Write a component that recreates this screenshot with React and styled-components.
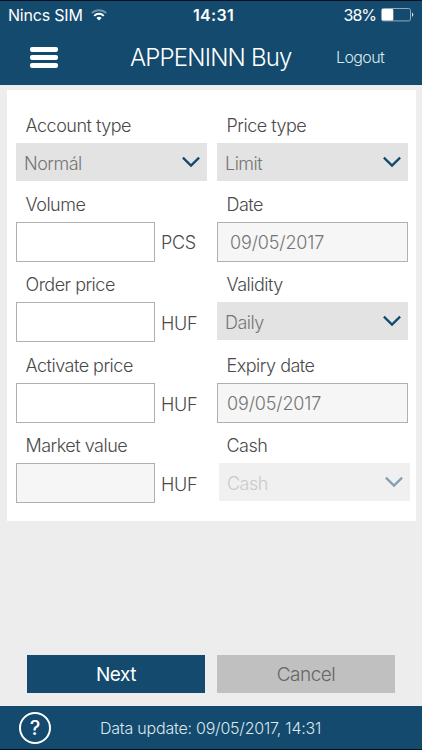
import React, { useState } from 'react'
import styled, { createGlobalStyle } from 'styled-components';

const fields = [
  { label: 'Account type', kind: 'select', value: 'Normál' },
  { label: 'Price type', kind: 'select', value: 'Limit' },
  { label: 'Volume', kind: 'amount', unit: 'PCS' },
  { label: 'Date', kind: 'date', value: '09/05/2017', indent: 12 },
  { label: 'Order price', kind: 'amount', unit: 'HUF' },
  { label: 'Validity', kind: 'select', value: 'Daily' },
  { label: 'Activate price', kind: 'amount', unit: 'HUF' },
  { label: 'Expiry date', kind: 'date', value: '09/05/2017', indent: 9 },
  { label: 'Market value', kind: 'amount', unit: 'HUF', disabled: true },
  { label: 'Cash', kind: 'select', value: 'Cash', disabled: true },
]

function Chevron() {
  return (
    <svg width='18' height='12' viewBox='0 0 18 12' fill='none'>
      <path d='M0.9 1.6 L9 9.6 L17.1 1.6' stroke='currentColor' strokeWidth='2.3' />
    </svg>
  )
}

function StatusBar() {
  return (
    <Status>
      <Carrier>
        Nincs SIM
        <svg width='16' height='12' viewBox='0 0 16 12' fill='none'>
          <path d='M0.8 4.2 A10.2 10.2 0 0 1 15.2 4.2' stroke='#6f94ad' strokeWidth='1.9' />
          <path d='M3.2 6.8 A6.8 6.8 0 0 1 12.8 6.8' stroke='#fff' strokeWidth='1.9' />
          <path d='M8 11.6 L5.4 9 A3.7 3.7 0 0 1 10.6 9 Z' fill='#fff' />
        </svg>
      </Carrier>
      <Clock>14:31</Clock>
      <Battery>
        38%
        <svg width='33' height='14' viewBox='0 0 33 14' fill='none'>
          <rect x='0.5' y='0.5' width='29' height='12.4' rx='1.8' stroke='#8facbf' />
          <rect x='1' y='1' width='11.3' height='11.4' rx='1' fill='#fff' />
          <path d='M31 4.6 Q32.3 5.2 32.3 6.7 Q32.3 8.2 31 8.8 Z' fill='#d6e1e8' />
        </svg>
      </Battery>
    </Status>
  )
}

function Field({ field }) {
  const { label, kind, value, unit, disabled, indent } = field;

  return (
    <Cell>
      <Label>{label}</Label>
      {kind === 'select' && (
        <Select $disabled={disabled}>
          <span>{value}</span>
          <Chevron />
        </Select>
      )}
      {kind === 'date' && <DateBox $indent={indent}>{value}</DateBox>}
      {kind === 'amount' && (
        <Amount>
          <Input disabled={disabled} aria-label={label} />
          <Unit $low={unit === 'HUF'}>{unit}</Unit>
        </Amount>
      )}
    </Cell>
  )
}

function App() {

  const [menuState, setMenuState] = useState(false);

  return (
    <Screen>
      <GlobalStyle />
      <StatusBar />

      <Header>
        <MenuButton aria-label='Menu' aria-expanded={menuState} onClick={() => setMenuState(!menuState)}>
          <i /><i /><i />
        </MenuButton>
        <Title>APPENINN Buy</Title>
        <Logout>Logout</Logout>
      </Header>

      <Card>
        {fields.map((field) => <Field key={field.label} field={field} />)}
      </Card>

      <Actions>
        <Button $primary>Next</Button>
        <Button>Cancel</Button>
      </Actions>

      <Footer>
        <Help>?</Help>
        <Update>Data update: 09/05/2017, 14:31</Update>
      </Footer>
    </Screen>
  )
}

const GlobalStyle = createGlobalStyle`
  body {
    margin: 0;
  }

  * {
    box-sizing: border-box;
  }

  button {
    border: 0;
    padding: 0;
    font: inherit;
    letter-spacing: inherit;
    cursor: pointer;
  }
`

const Screen = styled.div`
  width: 422px;
  height: 750px;
  display: flex;
  flex-direction: column;
  overflow: hidden;
  background: #ededed;
  border-top: 1px solid #06121f;
  border-bottom: 1px solid #06121f;
  font-family: Inter, 'Liberation Sans', sans-serif;
  font-weight: 300;
  font-size: 18px;
  letter-spacing: -0.5px;
  color: #4a4a4a;
`

const Status = styled.div`
  height: 28px;
  display: grid;
  grid-template-columns: 185px 1fr auto;
  align-items: center;
  padding: 0 8px;
  background: #134a6d;
  color: #fff;
  font-size: 16px;
  font-weight: 400;
  letter-spacing: -0.2px;
`

const Carrier = styled.div`
  display: flex;
  align-items: center;
  gap: 8px;
`

const Clock = styled.div`
  font-weight: 600;
  letter-spacing: 0.3px;
`

const Battery = styled.div`
  display: flex;
  align-items: center;
  gap: 5px;
  letter-spacing: -1px;
`

const Header = styled.header`
  height: 56px;
  display: grid;
  grid-template-columns: 130px 206px 1fr;
  align-items: center;
  background: #134a6d;
  color: #fff;
`

const MenuButton = styled.button`
  display: flex;
  flex-direction: column;
  gap: 3px;
  width: 28px;
  margin-left: 30px;
  background: none;

  i {
    height: 5px;
    border-radius: 2px;
    background: #fff;
  }
`

const Title = styled.div`
  font-size: 24px;
  letter-spacing: -0.82px;
  white-space: nowrap;
`

const Logout = styled.a`
  font-size: 16px;
  letter-spacing: -0.6px;
  color: #dce7ee;
`

const Card = styled.main`
  display: grid;
  grid-template-columns: 191px 191px;
  grid-template-rows: 79px 80px 81px 80px 80px;
  column-gap: 10px;
  width: 409px;
  height: 431px;
  margin: 5px 0 0 7px;
  padding: 13px 9px 0;
  background: #fff;
`

const Cell = styled.div`
  padding-top: 5px;
`

const Label = styled.div`
  height: 35px;
  line-height: 36px;
  padding-left: 9.5px;
  white-space: nowrap;
`

const Select = styled.div`
  height: 38px;
  display: flex;
  align-items: center;
  justify-content: space-between;
  padding: 2px 7px 0 8px;
  background: ${(props) => props.$disabled ? '#f0f0f0' : '#e3e3e3'};
  color: ${(props) => props.$disabled ? '#cacaca' : '#757575'};

  ${(props) => props.$disabled && 'margin: 0 -2px 0 2px;'}

  svg {
    margin-bottom: 2px;
    color: ${(props) => props.$disabled ? '#83a0b4' : '#134a6d'};
  }
`

const DateBox = styled.div`
  height: 40px;
  line-height: 40px;
  padding-left: ${(props) => props.$indent}px;
  border: 1px solid #b0b0b0;
  background: #f6f6f6;
  color: #757575;
  letter-spacing: -0.15px;
`

const Amount = styled.label`
  display: flex;
  align-items: center;
  gap: 6px;
`

const Unit = styled.span`
  padding-top: ${(props) => props.$low ? '2px' : 0};
  letter-spacing: -0.3px;
`

const Input = styled.input`
  width: 139px;
  height: 40px;
  border: 1px solid #b0b0b0;
  border-radius: 0;
  background: ${(props) => props.disabled ? '#f6f6f6' : '#fff'};
  font: inherit;
`

const Actions = styled.div`
  display: flex;
  gap: 12px;
  margin-top: auto;
  padding: 0 27px 13px;
`

const Button = styled.button`
  width: 178px;
  height: 38px;
  padding-top: 1px;
  background: ${(props) => props.$primary ? '#134a6d' : '#c0c0c0'};
  color: ${(props) => props.$primary ? '#fff' : '#666'};
  font-size: 19px;
  font-weight: ${(props) => props.$primary ? 400 : 300};
`

const Footer = styled.footer`
  height: 43px;
  display: flex;
  align-items: center;
  padding-left: 19px;
  background: #134a6d;
  color: #dce7ee;
  font-size: 16px;
`

const Help = styled.div`
  width: 32px;
  height: 32px;
  border: 2px solid #fff;
  border-radius: 50%;
  color: #fff;
  font-size: 20px;
  font-weight: 500;
  letter-spacing: 0;
  line-height: 29px;
  text-align: center;
`

const Update = styled.div`
  margin-left: 49px;
  letter-spacing: -0.22px;
  white-space: nowrap;
`

export default App
